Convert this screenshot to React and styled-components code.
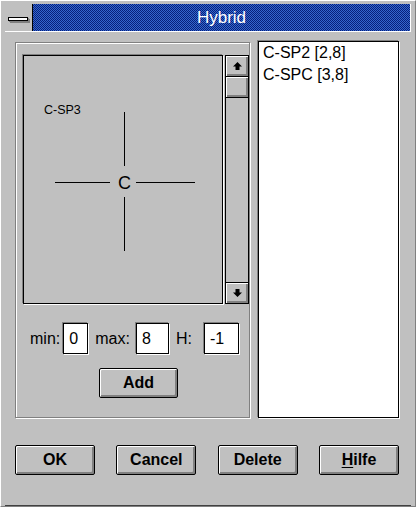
import React from 'react';
import styled, { createGlobalStyle } from 'styled-components';

const GlobalStyle = createGlobalStyle`
  html, body {
    margin: 0;
    padding: 0;
    background: #c0c0c0;
  }
  body {
    font-family: "Liberation Sans", Arial, sans-serif;
  }
`;

const Window = styled.div`
  box-sizing: border-box;
  width: 416px;
  height: 507px;
  background: #c0c0c0;
  border: 1px solid;
  border-color: #ffffff #808080 #808080 #ffffff;
  padding: 3px 4px 0 4px;
  display: flex;
  flex-direction: column;
`;

const Frame = styled.div`
  flex: 1;
  display: flex;
  flex-direction: column;
  border-bottom: 1px solid #404040;
`;

const TitleBar = styled.div`
  display: flex;
  height: 27px;
  border-bottom: 1px solid #ffffff;
`;

const SysMenu = styled.div`
  box-sizing: border-box;
  width: 28px;
  background: #c0c0c0;
  border-right: 1px solid #000;
  display: flex;
  align-items: center;
  padding-left: 3px;
`;

const SysBar = styled.div`
  width: 18px;
  height: 2px;
  background: #fff;
  border: 1px solid #000;
  box-shadow: 1px 1px 0 #808080, 2px 2px 0 #808080;
  margin-top: 2px;
`;

const Caption = styled.div`
  flex: 1;
  display: flex;
  align-items: center;
  justify-content: center;
  color: #fff;
  font-size: 17px;
  border-right: 1px solid #fff;
  background: repeating-conic-gradient(#06207c 0 25%, #3566cc 0 50%) 0 0 / 2px 2px;
`;

const Client = styled.div`
  display: flex;
  flex-direction: column;
  padding: 9px 12px 0 10px;
`;

const MainRow = styled.div`
  display: flex;
  gap: 8px;
  align-items: flex-start;
`;

const GroupBox = styled.div`
  box-sizing: border-box;
  width: 235px;
  height: 376px;
  margin-top: 1px;
  border: 1px solid #808080;
  box-shadow: inset 1px 1px 0 #fff, 1px 1px 0 #fff;
  padding: 12px 0 0 7px;
  display: flex;
  flex-direction: column;
`;

const EditorRow = styled.div`
  display: flex;
  gap: 2px;
`;

const Canvas = styled.div`
  box-sizing: border-box;
  width: 200px;
  height: 249px;
  border: 1px solid #000;
  box-shadow: -1px -1px 0 #808080, 1px 1px 0 #fff;
  background: #c0c0c0;
  svg {
    display: block;
  }
`;

const ScrollBar = styled.div`
  box-sizing: border-box;
  width: 24px;
  height: 249px;
  display: flex;
  flex-direction: column;
  border: 1px solid #000;
  background: #c0c0c0;
`;

const ScrollButton = styled.div`
  box-sizing: border-box;
  height: ${(p) => p.$h}px;
  display: flex;
  align-items: center;
  justify-content: center;
  background: #c0c0c0;
  box-shadow: inset 1px 1px 0 #fff, inset -1px -1px 0 #808080, inset -2px -2px 0 #808080;
  border-bottom: ${(p) => (p.$last ? 'none' : '1px solid #000')};
  border-top: ${(p) => (p.$last ? '1px solid #000' : 'none')};
`;

const Track = styled.div`
  flex: 1;
`;

const FieldRow = styled.div`
  display: flex;
  align-items: center;
  height: 31px;
  margin-top: 19px;
  padding-left: 7px;
  font-size: 16px;
  color: #000;
`;

const Label = styled.span`
  margin-left: ${(p) => p.$ml || 0}px;
`;

const Field = styled.div`
  box-sizing: border-box;
  width: ${(p) => p.$w}px;
  height: 31px;
  margin-left: ${(p) => p.$ml}px;
  background: #fff;
  border: 1px solid #000;
  box-shadow: -1px -1px 0 #808080, 1px 1px 0 #fff;
  padding-left: 5px;
  display: flex;
  align-items: center;
`;

const AddRow = styled.div`
  display: flex;
  margin-top: 14px;
  padding-left: 76px;
`;

const Button = styled.div`
  box-sizing: border-box;
  width: ${(p) => p.$w || 80}px;
  height: 30px;
  display: flex;
  align-items: center;
  justify-content: center;
  background: #c0c0c0;
  border: 1px solid #000;
  border-radius: 2px;
  box-shadow: inset 1px 1px 0 #fff, inset -1px -1px 0 #808080, inset -2px -2px 0 #808080;
  font-size: 16px;
  font-weight: bold;
  color: #000;
  u {
    text-decoration: underline;
    text-underline-offset: 2px;
  }
`;

const ListBox = styled.div`
  box-sizing: border-box;
  width: 144px;
  height: 377px;
  border: 1px solid #000;
  box-shadow: -1px -1px 0 #808080, 1px 1px 0 #fff;
  background: #fff;
  padding: 0 0 0 4px;
`;

const ListItem = styled.div`
  font-size: 16px;
  line-height: 21.5px;
  color: #000;
`;

const ButtonRow = styled.div`
  display: flex;
  justify-content: space-between;
  margin-top: 27px;
`;

const Arrow = ({ down }) => (
  <svg width="9" height="8" viewBox="0 0 9 8">
    <polygon
      points="4.5,0 9,4.5 6.5,4.5 6.5,8 2.5,8 2.5,4.5 0,4.5"
      fill="#000"
      transform={down ? 'rotate(180 4.5 4)' : undefined}
    />
  </svg>
);

const items = ['C-SP2 [2,8]', 'C-SPC [3,8]'];

export default function App() {
  return (
    <>
      <GlobalStyle />
      <Window>
        <Frame>
          <TitleBar>
            <SysMenu>
              <SysBar />
            </SysMenu>
            <Caption>Hybrid</Caption>
          </TitleBar>
          <Client>
            <MainRow>
              <GroupBox>
                <EditorRow>
                  <Canvas>
                    <svg width="198" height="247">
                      <text x="20" y="58" fontSize="12.5" fontFamily="Liberation Sans, Arial, sans-serif" fill="#000">
                        C-SP3
                      </text>
                      <g stroke="#000" strokeWidth="1">
                        <line x1="100.5" y1="56" x2="100.5" y2="110" />
                        <line x1="100.5" y1="141" x2="100.5" y2="195" />
                        <line x1="31" y1="126.5" x2="86" y2="126.5" />
                        <line x1="112" y1="126.5" x2="171" y2="126.5" />
                      </g>
                      <text
                        x="100.5"
                        y="133"
                        fontSize="18"
                        textAnchor="middle"
                        fontFamily="Liberation Sans, Arial, sans-serif"
                        fill="#000"
                      >
                        C
                      </text>
                    </svg>
                  </Canvas>
                  <ScrollBar>
                    <ScrollButton $h={21}>
                      <Arrow />
                    </ScrollButton>
                    <ScrollButton $h={21}></ScrollButton>
                    <Track />
                    <ScrollButton $h={21} $last>
                      <Arrow down />
                    </ScrollButton>
                  </ScrollBar>
                </EditorRow>
                <FieldRow>
                  <Label>min:</Label>
                  <Field $w={25} $ml={3}>0</Field>
                  <Label $ml={7}>max:</Label>
                  <Field $w={33} $ml={6}>8</Field>
                  <Label $ml={7}>H:</Label>
                  <Field $w={35} $ml={12}>-1</Field>
                </FieldRow>
                <AddRow>
                  <Button $w={79}>Add</Button>
                </AddRow>
              </GroupBox>
              <ListBox>
                {items.map((t) => (
                  <ListItem key={t}>{t}</ListItem>
                ))}
              </ListBox>
            </MainRow>
            <ButtonRow>
              <Button>OK</Button>
              <Button>Cancel</Button>
              <Button>Delete</Button>
              <Button>
                <u>H</u>ilfe
              </Button>
            </ButtonRow>
          </Client>
        </Frame>
      </Window>
    </>
  );
}
